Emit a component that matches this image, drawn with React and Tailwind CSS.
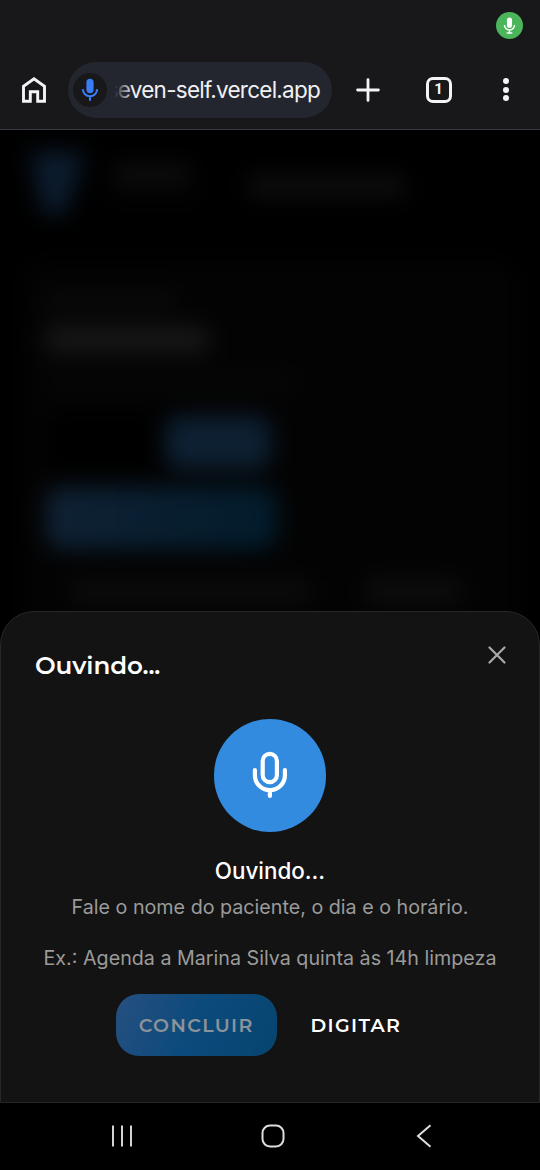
import React from 'react';

function HomeIcon() {
  return (
    <svg className="w-[24px] h-[26px]" viewBox="0 0 24 26" fill="none" stroke="#f4f4f6" strokeWidth="2.9">
      <path d="M1.5 24.3V9.3L12 1.8l10.5 7.5v15h-6.8v-9.6H8.3v9.6z" />
    </svg>
  );
}

function SolidMic({ className, base }) {
  return (
    <svg className={className} viewBox="0 0 18 24" fill="none">
      <rect x="5.4" y="0.8" width="7.2" height="14.4" rx="3.6" fill="currentColor" />
      <path d="M1.9 11.2a7.1 7.1 0 0 0 14.2 0M9 18.3v4.4" stroke="currentColor" strokeWidth="2.1" />
      {base && <path d="M5 22.6h8" stroke="currentColor" strokeWidth="2" />}
    </svg>
  );
}

function BrowserBar() {
  return (
    <header className="h-[130px] shrink-0 flex flex-col bg-[#18181a] border-b border-[#3b3c43]">
      <div className="h-[50px] flex items-center justify-end pr-[17px]">
        <div className="w-[27px] h-[27px] rounded-full bg-[#4bb55b] flex items-center justify-center text-white">
          <SolidMic className="w-[13px] h-[17px]" base />
        </div>
      </div>

      <div className="h-[79px] flex items-center">
        <button className="w-[68px] h-full flex items-center justify-center">
          <HomeIcon />
        </button>
        <div className="w-[264px] h-[56px] rounded-full bg-[#24262f] flex items-center pl-[5px] pr-3">
          <div className="w-[34px] h-[34px] shrink-0 rounded-full bg-[#18181a] flex items-center justify-center text-[#3b7cf5]">
            <SolidMic className="w-[18px] h-[24px]" />
          </div>
          <div className="relative flex-1 min-w-0 h-[36px] flex items-center justify-end">
            <span className="shrink-0 text-[22.5px] leading-[36px] tracking-[-0.75px] whitespace-nowrap text-[#f0f0f4] font-['Inter',sans-serif]">
              seven-self.vercel.app
            </span>
            <div className="absolute left-0 top-0 h-full w-[26px] bg-gradient-to-r from-[#24262f] from-30% to-transparent"></div>
          </div>
        </div>
        <button className="w-[72px] h-full flex items-center justify-center">
          <svg className="w-[24px] h-[24px]" viewBox="0 0 24 24" stroke="#f4f4f6" strokeWidth="2.8" strokeLinecap="round">
            <path d="M12 1.6v20.8M1.6 12h20.8" />
          </svg>
        </button>
        <button className="w-[69px] h-full flex items-center justify-center">
          <span className="w-[26px] h-[26px] rounded-[7px] border-3 border-[#f4f4f6] flex items-center justify-center text-[15px] leading-none font-bold text-[#f4f4f6] font-['Roboto',sans-serif]">
            1
          </span>
        </button>
        <button className="w-[66px] h-full flex flex-col items-center justify-center gap-[2.5px]">
          <span className="w-[6px] h-[6px] rounded-full bg-[#f4f4f6]"></span>
          <span className="w-[6px] h-[6px] rounded-full bg-[#f4f4f6]"></span>
          <span className="w-[6px] h-[6px] rounded-full bg-[#f4f4f6]"></span>
        </button>
      </div>
    </header>
  );
}

// Page content behind the modal overlay
function DimmedPage() {
  return (
    <div className="absolute inset-0 overflow-hidden bg-black">
      <div className="flex items-start h-[130px] pt-[22px] pl-[30px] blur-[11px]">
        <svg className="w-[54px] h-[66px]" viewBox="0 0 54 66">
          <path d="M0 0h56L34 64 12 60z" fill="#0c1c2e" />
        </svg>
        <div className="flex flex-col gap-2 ml-[28px] pt-[14px]">
          <div className="w-[78px] h-[16px] bg-[#101010]"></div>
          <div className="w-[88px] h-[10px] bg-[#050505]"></div>
        </div>
        <div className="w-[156px] h-[22px] ml-[48px] mt-[23px] bg-[#0e0e0e]"></div>
      </div>
      <div className="mx-[22px] h-[400px] rounded-3xl bg-[#030303] pl-[24px] pt-[32px] blur-[11px]">
        <div className="w-[130px] h-[18px] bg-[#0a0a0a]"></div>
        <div className="w-[162px] h-[27px] mt-[16px] bg-[#171717]"></div>
        <div className="w-[250px] h-[14px] mt-[22px] bg-[#080808]"></div>
        <div className="flex w-[230px] h-[62px] mt-[22px] p-[5px] rounded-2xl bg-black">
          <div className="w-[106px] h-[53px] ml-auto rounded-xl bg-[#0d2032]"></div>
        </div>
        <div className="w-[231px] h-[62px] mt-[14px] rounded-2xl bg-gradient-to-r from-[#0f2134] to-[#021c2c]"></div>
        <div className="flex gap-[56px] ml-[26px] mt-[31px]">
          <div className="w-[238px] h-[22px] bg-[#0c0c0c]"></div>
          <div className="w-[94px] h-[22px] bg-[#0e0e0e]"></div>
        </div>
      </div>
    </div>
  );
}

function ListeningSheet() {
  return (
    <section className="relative h-[492px] mt-auto flex flex-col rounded-t-[34px] border border-[#272727] bg-[#131313]">
      <div className="flex items-start justify-between pl-[34px] pr-[33px] pt-[33px]">
        <h2 className="mt-[4px] mb-px text-[24.6px] leading-[32px] font-semibold tracking-[-0.1px] text-white font-['Montserrat','Inter',sans-serif]">
          Ouvindo...
        </h2>
        <button className="w-[18px] h-[20px] flex items-center">
          <svg className="w-[18px] h-[18px]" viewBox="0 0 18 18" stroke="#a9a9a9" strokeWidth="2.2" strokeLinecap="round">
            <path d="M1.5 1.5l15 15M16.5 1.5l-15 15" />
          </svg>
        </button>
      </div>

      <div className="flex flex-col items-center mt-[37px]">
        <div className="w-[112.5px] h-[112.5px] rounded-full bg-[#338bdf] flex items-center justify-center">
          <svg className="w-[36px] h-[48px]" viewBox="0 0 36 48" fill="none" stroke="#fff" strokeWidth="4.2" strokeLinecap="round">
            <rect x="10.7" y="2.8" width="14.2" height="28.4" rx="7.1" />
            <path d="M2.9 19.2v5a15 15 0 0 0 30 0v-5M17.9 39.4v5.6" />
          </svg>
        </div>
        <p className="mt-[23.5px] text-[22.4px] leading-[32px] font-medium text-white font-['Inter',sans-serif]">
          Ouvindo...
        </p>
        <p className="mt-[4px] text-[19.7px] leading-[32px] whitespace-nowrap text-[#9b9b9b] font-['Inter',sans-serif]">
          Fale o nome do paciente, o dia e o horário.
        </p>
        <p className="mt-[19px] text-[19.7px] leading-[32px] whitespace-nowrap text-[#9b9b9b] font-['Inter',sans-serif]">
          Ex.: Agenda a Marina Silva quinta às 14h limpeza
        </p>
      </div>

      <div className="flex items-center mt-[20px] pl-[115px] text-[19px] font-semibold font-['Montserrat','Inter',sans-serif]">
        <button className="w-[160.5px] h-[62px] pt-[2px] rounded-[23px] bg-linear-[115deg] from-[#265080] via-[#0b4a7c] to-[#07446f] tracking-[1.35px] text-[#8b9299]">
          CONCLUIR
        </button>
        <button className="h-[62px] pt-[2px] ml-[34px] tracking-[1.35px] text-white">
          DIGITAR
        </button>
      </div>
    </section>
  );
}

function SystemNav() {
  return (
    <nav className="h-[67px] shrink-0 flex items-center pl-[111px] pb-px bg-black text-[#dedede]">
      <svg className="w-[22px] h-[24px]" viewBox="0 0 22 24" stroke="currentColor" strokeWidth="1.9">
        <path d="M2 1.5v21M11 1.5v21M20 1.5v21" />
      </svg>
      <svg className="w-[24px] h-[24px] ml-[128px]" viewBox="0 0 24 24" fill="none" stroke="currentColor" strokeWidth="2">
        <rect x="1.5" y="1.5" width="21" height="21" rx="7.5" />
      </svg>
      <svg className="w-[16px] h-[24px] ml-[131px]" viewBox="0 0 16 24" fill="none" stroke="currentColor" strokeWidth="2">
        <path d="M14.5 1.2L2 12l12.5 10.8" />
      </svg>
    </nav>
  );
}

function App() {
  return (
    <div className="w-[540px] h-[1170px] flex flex-col overflow-hidden bg-black">
      <BrowserBar />
      <main className="relative flex-1 min-h-0 flex flex-col">
        <DimmedPage />
        <ListeningSheet />
      </main>
      <SystemNav />
    </div>
  );
}

export default App;
